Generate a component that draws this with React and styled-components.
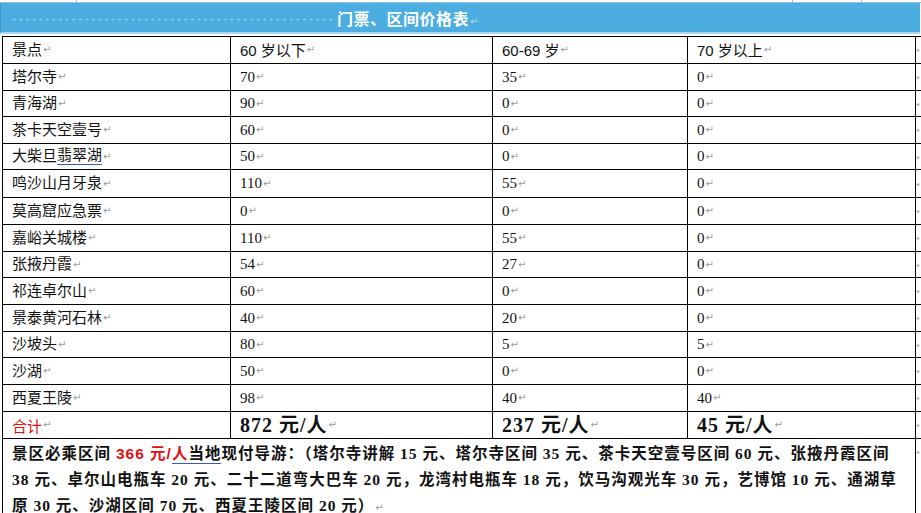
import React from 'react';
import styled, { createGlobalStyle } from 'styled-components';

const rows = [
	['塔尔寺', '70', '35', '0'],
	['青海湖', '90', '0', '0'],
	['茶卡天空壹号', '60', '0', '0'],
	['大柴旦翡翠湖', '50', '0', '0'],
	['鸣沙山月牙泉', '110', '55', '0'],
	['莫高窟应急票', '0', '0', '0'],
	['嘉峪关城楼', '110', '55', '0'],
	['张掖丹霞', '54', '27', '0'],
	['祁连卓尔山', '60', '0', '0'],
	['景泰黄河石林', '40', '20', '0'],
	['沙坡头', '80', '5', '5'],
	['沙湖', '50', '0', '0'],
	['西夏王陵', '98', '40', '40'],
];

const heights = [27, 27, 26, 27, 26, 28, 27, 27, 26, 27, 27, 26, 27, 27, 27];

export default function App(){
	return(
		<>
			<Global/>
			<Page>
				<TopStrip>
					<StripCell $w={76}/>
					<StripCell $w={715}/>
					<StripCell $w={68}/>
					<StripCell $w={60}/>
				</TopStrip>
				<TitleBar>
					<Leader/>
					<Title>门票、区间价格表<Mark $light>↵</Mark></Title>
				</TitleBar>
				<Table>
					<Row $h={heights[0]}>
						<Cell $first>景点<Mark>↵</Mark></Cell>
						<Cell $sans>60 岁以下<Mark>↵</Mark></Cell>
						<Cell $sans>60-69 岁<Mark>↵</Mark></Cell>
						<Cell $sans>70 岁以上<Mark>↵</Mark></Cell>
						<EndMark>◂</EndMark>
					</Row>
					{rows.map((r, i) => (
						<Row key={r[0]} $h={heights[i + 1]}>
							<Cell $first>
								{r[0] === '大柴旦翡翠湖' ? <>大柴旦<Squiggle>翡翠湖</Squiggle></> : r[0]}
								<Mark>↵</Mark>
							</Cell>
							<Cell>{r[1]}<Mark>↵</Mark></Cell>
							<Cell>{r[2]}<Mark>↵</Mark></Cell>
							<Cell>{r[3]}<Mark>↵</Mark></Cell>
							<EndMark>◂</EndMark>
						</Row>
					))}
					<Row $h={heights[14]}>
						<Cell $first><Red>合计</Red><Mark>↵</Mark></Cell>
						<Cell><Total>872 元/人</Total><Mark>↵</Mark></Cell>
						<Cell><Total>237 元/人</Total><Mark>↵</Mark></Cell>
						<Cell><Total>45 元/人</Total><Mark>↵</Mark></Cell>
						<EndMark>◂</EndMark>
					</Row>
					<NoteRow>
						<Note>
							<Line>景区必乘区间 <RedNum>366 元/<Squiggle>人</Squiggle></RedNum><Squiggle>当地</Squiggle>现付导游：（塔尔寺讲解 15 元、塔尔寺区间 35 元、茶卡天空壹号区间 60 元、张掖丹霞区间</Line>
							<Line>38 元、卓尔山电瓶车 20 元、二十二道弯大巴车 20 元，龙湾村电瓶车 18 元，饮马沟观光车 30 元，艺博馆 10 元、通湖草</Line>
							<Line>原 30 元、沙湖区间 70 元、西夏王陵区间 20 元）<Mark>↵</Mark></Line>
						</Note>
						<EndMark $top>◂</EndMark>
					</NoteRow>
				</Table>
			</Page>
		</>
	);
}

const Global = createGlobalStyle`
	html, body {
		margin: 0;
		padding: 0;
		background: #fff;
		overflow: hidden;
	}
`;

const Page = styled.div`
	width: 921px;
	height: 513px;
	overflow: hidden;
	font-family: 'Liberation Serif', 'Noto Sans CJK SC', serif;
	color: #111;
`;

const TopStrip = styled.div`
	display: flex;
	height: 2px;
	border-bottom: 1px solid #8cc2e6;
`;

const StripCell = styled.div`
	width: ${p => p.$w}px;
	border-right: 1px solid #8cc2e6;
	flex-shrink: 0;
`;

const TitleBar = styled.div`
	height: 29px;
	margin-right: 1px;
	background: #4badE0;
	border-bottom: 2px solid #a9d6f2;
	border-left: 1px solid #3e98cc;
	display: flex;
	align-items: center;
	padding-left: 10px;
`;

const Leader = styled.div`
	width: 322px;
	height: 3px;
	margin-top: 3px;
	background-image: radial-gradient(circle, #94c8ea 0.9px, transparent 1.3px);
	background-size: 6.6px 3px;
	background-repeat: repeat-x;
`;

const Title = styled.div`
	margin-left: 4px;
	font-family: 'Noto Sans CJK SC', sans-serif;
	font-weight: 700;
	font-size: 16px;
	letter-spacing: 0.5px;
	color: #fff;
`;

const Table = styled.div`
	margin: 2px 0 0 2px;
	width: 919px;
`;

const Row = styled.div`
	display: grid;
	grid-template-columns: 229px 262px 195px 228px 5px;
	height: ${p => p.$h}px;
	box-sizing: border-box;
	border-top: 1px solid #000;
`;

const Cell = styled.div`
	display: flex;
	align-items: center;
	padding-left: 9px;
	box-sizing: border-box;
	border-left: ${p => p.$first ? '1px solid #000' : 'none'};
	border-right: 1px solid #000;
	font-size: 15px;
	font-family: ${p => p.$sans ? "'Liberation Sans', 'Noto Sans CJK SC', sans-serif" : "'Liberation Serif', 'Noto Sans CJK SC', serif"};
	white-space: nowrap;
	line-height: 1;
`;

const Mark = styled.span`
	font-family: 'DejaVu Sans', sans-serif;
	font-size: 10px;
	font-weight: 400;
	color: ${p => p.$light ? '#b8dcf2' : '#9a9a9a'};
	margin-left: 1px;
	letter-spacing: 0;
`;

const EndMark = styled.span`
	display: flex;
	align-items: ${p => p.$top ? 'flex-start' : 'center'};
	padding-top: ${p => p.$top ? '10px' : '0'};
	padding-left: 0;
	font-family: 'DejaVu Sans', sans-serif;
	font-size: 6px;
	line-height: 1;
	color: #a8a8a8;
`;

const Squiggle = styled.span`
	border-bottom: 1px solid #2f5fb8;
	padding-bottom: 1px;
`;

const Red = styled.span`
	color: #e01010;
	font-family: 'Noto Sans CJK SC', sans-serif;
`;

const Total = styled.span`
	font-weight: 700;
	font-size: 20px;
	letter-spacing: 1px;
`;

const NoteRow = styled.div`
	display: grid;
	grid-template-columns: 914px 5px;
	border-top: 1px solid #000;
`;

const Note = styled.div`
	border-left: 1px solid #000;
	border-right: 1px solid #000;
	padding: 2px 0 0 9px;
	height: 90px;
	font-weight: 700;
	font-size: 15.5px;
`;

const Line = styled.div`
	height: 26px;
	line-height: 26px;
	white-space: nowrap;
	letter-spacing: 1px;
`;

const RedNum = styled.span`
	color: #e01010;
	font-family: 'Liberation Sans', 'Noto Sans CJK SC', sans-serif;
`;
